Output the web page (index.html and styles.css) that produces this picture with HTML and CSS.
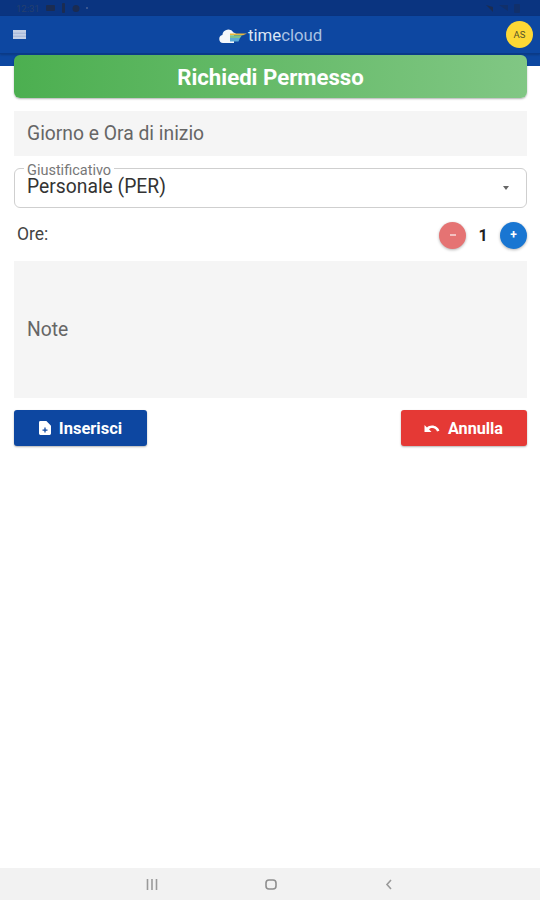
FILE: index.html
```html
<!DOCTYPE html>
<html lang="it">
<head>
<meta charset="utf-8">
<title>Richiedi Permesso</title>
<link rel="stylesheet" href="styles.css">
</head>
<body>
<div class="screen">
  <div class="statusbar">
    <div class="status-group">
      <span class="clock">12:31</span>
      <svg class="s-icon" width="9" height="8" viewBox="0 0 9 8"><rect x="0" y="1" width="9" height="6" rx="1" fill="#1b2c52"/></svg>
      <svg class="s-icon" width="5" height="10" viewBox="0 0 5 10"><rect x="1" y="0" width="3" height="10" rx="1" fill="#1b2c52"/></svg>
      <svg class="s-icon" width="8" height="9" viewBox="0 0 8 9"><circle cx="4" cy="4.500" r="3.500" fill="#1b2c52"/></svg>
      <span class="dot"></span>
    </div>
    <div class="status-group">
      <svg class="s-icon" width="7" height="7" viewBox="0 0 7 7"><path d="M0 0L7 7V2Z" fill="#1b2c52"/></svg>
      <svg class="s-icon faint" width="9" height="8" viewBox="0 0 9 8"><path d="M0 1L9 7V1Z" fill="#1b2c52"/></svg>
      <svg class="s-icon faint" width="6" height="9" viewBox="0 0 6 9"><rect width="6" height="9" rx="1" fill="#1b2c52"/></svg>
    </div>
  </div>
  <header class="appbar">
    <div class="appbar-row">
      <svg class="menu" width="13" height="9" viewBox="0 0 13 9"><rect width="13" height="9" fill="#c4d0e6"/><rect y="2.800" width="13" height=".7" fill="#8fa6cf"/><rect y="5.800" width="13" height=".7" fill="#8fa6cf"/></svg>
      <div class="logo">
        <svg width="28" height="17" viewBox="0 0 28 17">
          <path d="M4 16a4 4 0 0 1-.6-7.900A6 6 0 0 1 14.500 5.500a4 4 0 0 1 3 2.500H15v8Z" fill="#f4f7fb"/>
          <path d="M11 6.500h17l-4 1.700H11Z" fill="#e9b93f"/>
          <path d="M11 8.200h12l-2 2.800h-10Z" fill="#7dc28f"/>
          <path d="M11 11h10l-1.500 3.500H11Z" fill="#5aa9d6"/>
        </svg>
        <span class="logo-text"><span class="logo-time">time</span>cloud</span>
      </div>
      <div class="avatar">AS</div>
    </div>
    <div class="appbar-tail"></div>
  </header>
  <main class="content">
    <h1 class="title">Richiedi Permesso</h1>
    <div class="field day">Giorno e Ora di inizio</div>
    <div class="select">
      <span class="select-label">Giustificativo</span>
      <span class="select-value">Personale (PER)</span>
      <span class="caret"></span>
    </div>
    <div class="hours">
      <span class="hours-label">Ore:</span>
      <div class="stepper">
        <span class="round minus"><span class="minus-bar"></span></span>
        <span class="count">1</span>
        <span class="round plus">+</span>
      </div>
    </div>
    <div class="field note">Note</div>
    <div class="actions">
      <button class="btn insert">
        <svg width="12" height="14" viewBox="0 0 13 15"><path d="M1.500 0H8l5 5v8.500a1.500 1.500 0 0 1-1.500 1.500h-10A1.500 1.500 0 0 1 0 13.500V1.500A1.500 1.500 0 0 1 1.500 0Z" fill="#fff"/><path d="M5.800 7h1.400v2h2v1.400h-2v2H5.800v-2h-2V9h2Z" fill="#0d47a1"/></svg>
        Inserisci
      </button>
      <button class="btn cancel">
        <svg width="16" height="9" viewBox="0 0 16 9"><path d="M8 1.500c-2 0-3.700.7-5 1.900L.5 1v7H7.500L5 5.300C5.900 4.500 7 4 8.300 4c2.200 0 4 1.400 4.700 3.500l2.400-.8C14.400 3.700 11.500 1.500 8 1.500Z" fill="#fff"/></svg>
        Annulla
      </button>
    </div>
  </main>
  <nav class="navbar">
    <svg width="12" height="11" viewBox="0 0 12 11"><path d="M1.500 0v11M6 0v11M10.500 0v11" stroke="#9a9a9a" stroke-width="1.600"/></svg>
    <svg width="12" height="11" viewBox="0 0 12 11"><rect x="1" y="1" width="10" height="9" rx="3" fill="none" stroke="#8f8f8f" stroke-width="1.600"/></svg>
    <svg width="12" height="11" viewBox="0 0 12 11"><path d="M8 1L4 5.500 8 10" fill="none" stroke="#9a9a9a" stroke-width="1.600"/></svg>
  </nav>
</div>
</body>
</html>
```
FILE: styles.css
```css
* { box-sizing: border-box; }
html, body { margin: 0; padding: 0; }
body { font-family: Roboto, "Liberation Sans", sans-serif; background: #fff; }
.screen { width: 540px; height: 900px; display: flex; flex-direction: column; overflow: hidden; background: #fff; }

.statusbar { height: 16px; flex: none; background: #0a3480; display: flex; align-items: center; justify-content: space-between; padding: 0 20px 0 16px; }
.status-group { display: flex; align-items: center; gap: 6px; }
.clock { font-size: 9.500px; color: #25406f; }
.s-icon { display: block; }
.faint { opacity: .45; }
.dot { width: 2px; height: 2px; background: #4a6296; border-radius: 50%; }

.appbar { flex: none; background: #0d47a1; height: 50px; }
.appbar-row { height: 38px; position: relative; display: flex; align-items: center; justify-content: space-between; padding: 0 7px 0 13px; border-bottom: 1px solid #0a3a88; box-shadow: 0 1px 2px rgba(0,0,0,.2); }
.appbar-tail { height: 12px; background: #0d47a1; }
.menu { display: block; }
.logo { position: absolute; left: 219px; top: 11px; display: flex; align-items: center; gap: 1px; }
.logo-text { font-size: 16.800px; color: #a9c1e3; line-height: 17px; }
.logo-time { color: #dbe6f4; }
.avatar { width: 27px; height: 27px; border-radius: 50%; background: #fdd835; color: #55532a; font-size: 9.500px; display: flex; align-items: center; justify-content: center; }

.content { flex: 1; display: flex; flex-direction: column; padding: 0 13px 0 14px; margin-top: -11px; position: relative; }
.title { margin: 0; height: 43px; border-radius: 6px; background: linear-gradient(90deg, #4caf50, #81c784); color: #fff; font-size: 22.200px; font-weight: 700; display: flex; align-items: center; justify-content: center; box-shadow: 0 1px 2px rgba(0,0,0,.3); }
.field { background: #f5f5f5; color: #666; font-size: 19.300px; display: flex; align-items: center; padding-left: 13px; }
.day { height: 45px; margin-top: 13px; }
.select { height: 40px; margin-top: 12px; border: 1px solid #cfcfcf; border-radius: 6px; position: relative; display: flex; align-items: center; padding: 0 12px; }
.select-label { position: absolute; left: 9px; top: -4px; padding: 0 3px; background: #fff; font-size: 14.500px; line-height: 12px; color: #777; }
.select-value { font-size: 19.300px; color: #333; line-height: 18px; position: relative; top: -1px; }
.caret { position: absolute; right: 17px; top: 17px; width: 0; height: 0; border-left: 3.500px solid transparent; border-right: 3.500px solid transparent; border-top: 4px solid #666; }

.hours { height: 30px; margin-top: 12px; display: flex; align-items: center; justify-content: space-between; padding-left: 3px; }
.hours-label { font-size: 17.500px; color: #444; position: relative; top: -1px; }
.stepper { display: flex; align-items: center; }
.round { width: 27px; height: 27px; border-radius: 50%; display: flex; align-items: center; justify-content: center; color: #fff; box-shadow: 0 1px 3px rgba(0,0,0,.3); }
.minus { background: #e57373; }
.minus-bar { width: 6px; height: 2px; background: #f3c1c1; }
.plus { background: #1976d2; font-size: 12px; font-weight: 700; }
.count { width: 34px; text-align: center; font-size: 16px; font-weight: 700; color: #222; }

.note { height: 137px; margin-top: 11px; }
.actions { margin-top: 12px; display: flex; justify-content: space-between; }
.btn { height: 36px; border: 0; border-radius: 3px; color: #fff; font: 700 16.200px Roboto, "Liberation Sans", sans-serif; display: flex; align-items: center; justify-content: center; gap: 8px; box-shadow: 0 1px 2px rgba(0,0,0,.3); padding: 0; }
.insert { width: 133px; background: #0d47a1; font-size: 16.500px; }
.cancel { width: 126px; background: #e53935; padding-right: 1px; }

.navbar { flex: none; height: 32px; background: #f2f2f2; display: flex; align-items: center; justify-content: space-between; padding: 0 145px 0 146px; }
```
